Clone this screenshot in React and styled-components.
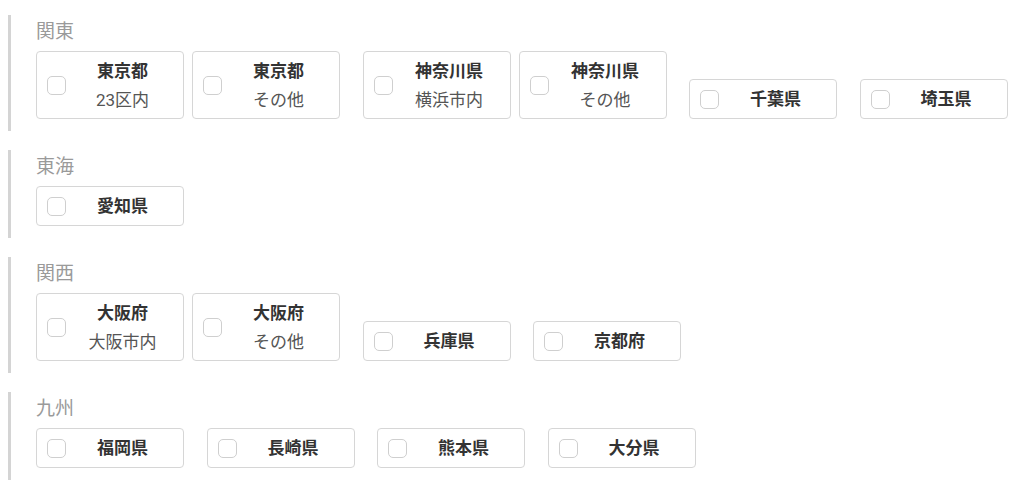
import React from 'react'
import styled, { createGlobalStyle } from 'styled-components'

const GlobalStyle = createGlobalStyle`
  body {
    margin: 0;
    background: #fff;
    font-family: Roboto, "Noto Sans CJK JP", sans-serif;
  }
`

const Page = styled.div`
  padding: 15px 8px;
  display: flex;
  flex-direction: column;
  gap: 19px;
`

const Region = styled.section`
  border-left: 3px solid #d4d4d4;
  padding: 5px 0 12px 25px;
`

const RegionTitle = styled.div`
  font-size: 19px;
  line-height: 23px;
  color: #9a9a9a;
  margin-bottom: 8px;
`

const Row = styled.div`
  display: flex;
  align-items: flex-end;
  gap: 22.5px;
`

const Group = styled.div`
  display: flex;
  gap: 8px;
`

const Card = styled.label`
  box-sizing: border-box;
  width: 148px;
  height: ${(p) => (p.tall ? '68px' : '40px')};
  border: 1px solid #d6d6d6;
  border-radius: 4px;
  display: flex;
  align-items: center;
  padding: 0 4px 0 10px;
  background: #fff;
  cursor: pointer;
`

const Box = styled.span`
  box-sizing: border-box;
  width: 19px;
  height: 19px;
  border: 1px solid #cfcfcf;
  border-radius: 5px;
  flex: none;
`

const Labels = styled.div`
  flex: 1;
  display: flex;
  flex-direction: column;
  align-items: center;
  margin-top: ${(p) => (p.tall ? '2px' : '0')};
`

const Name = styled.span`
  font-size: 17px;
  font-weight: 700;
  line-height: 29px;
  color: #333;
`

const Sub = styled.span`
  font-size: 17px;
  line-height: 29px;
  color: #555;
`

const regions = [
  {
    title: '関東',
    groups: [
      [{ name: '東京都', sub: '23区内' }, { name: '東京都', sub: 'その他' }],
      [{ name: '神奈川県', sub: '横浜市内' }, { name: '神奈川県', sub: 'その他' }],
      [{ name: '千葉県' }],
      [{ name: '埼玉県' }],
    ],
  },
  { title: '東海', groups: [[{ name: '愛知県' }]] },
  {
    title: '関西',
    groups: [
      [{ name: '大阪府', sub: '大阪市内' }, { name: '大阪府', sub: 'その他' }],
      [{ name: '兵庫県' }],
      [{ name: '京都府' }],
    ],
  },
  {
    title: '九州',
    groups: [[{ name: '福岡県' }], [{ name: '長崎県' }], [{ name: '熊本県' }], [{ name: '大分県' }]],
  },
]

const Option = ({ name, sub }) => (
  <Card tall={!!sub}>
    <Box />
    <Labels tall={!!sub}>
      <Name>{name}</Name>
      {sub && <Sub>{sub}</Sub>}
    </Labels>
  </Card>
)

const App = () => (
  <>
    <GlobalStyle />
    <Page>
      {regions.map((r) => (
        <Region key={r.title}>
          <RegionTitle>{r.title}</RegionTitle>
          <Row>
            {r.groups.map((g, i) => (
              <Group key={i}>
                {g.map((o, j) => (
                  <Option key={j} {...o} />
                ))}
              </Group>
            ))}
          </Row>
        </Region>
      ))}
    </Page>
  </>
)

export default App
